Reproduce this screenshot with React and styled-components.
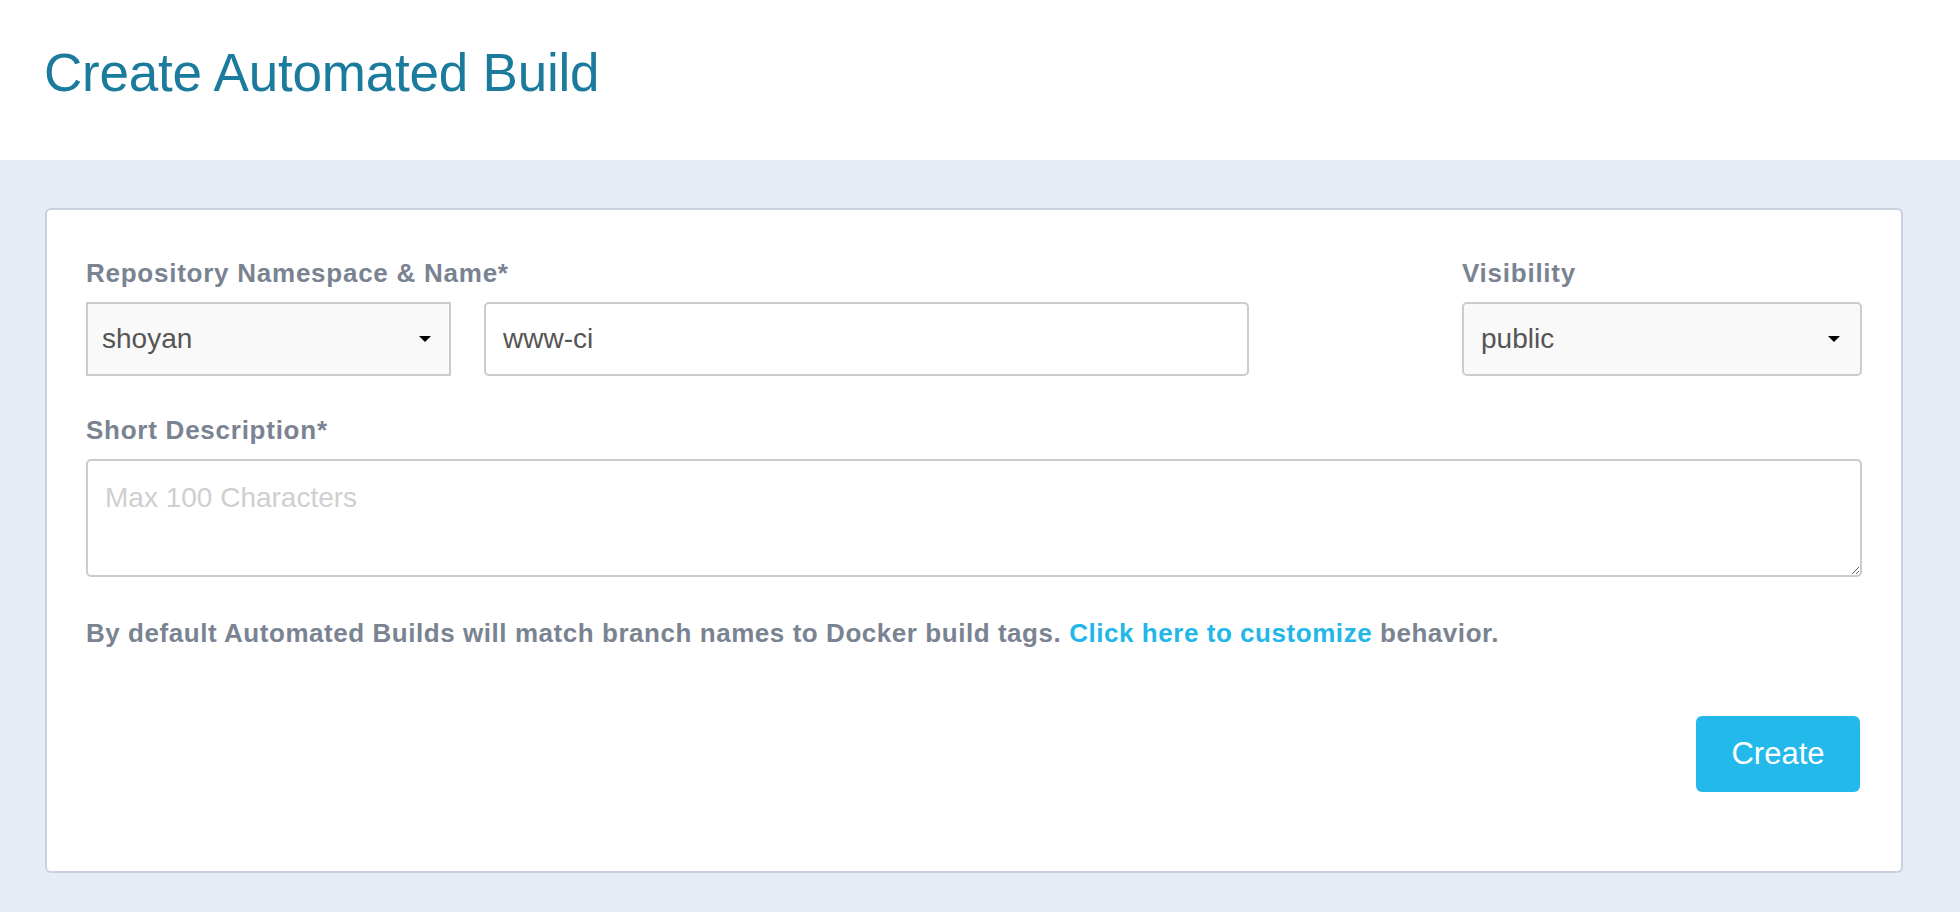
import React from "react";
import styled, { createGlobalStyle } from "styled-components";

const GlobalStyle = createGlobalStyle`
  html, body {
    margin: 0;
    padding: 0;
    background: #e5ecf4;
    font-family: "Liberation Sans", Arial, Helvetica, sans-serif;
  }
  * {
    box-sizing: border-box;
  }
`;

const Header = styled.header`
  height: 160px;
  background: #fff;
  padding: 41px 44px 0;
`;

const Title = styled.h1`
  margin: 0;
  font-size: 53px;
  line-height: 1.2;
  font-weight: 400;
  color: #1b7b9c;
  letter-spacing: -0.2px;
`;

const Main = styled.main`
  padding: 48px 57px 39px 45px;
`;

const Card = styled.section`
  background: #fff;
  border: 2px solid #c8d1dd;
  border-radius: 6px;
  padding: 46px 39px 79px;
`;

const Row = styled.div`
  display: flex;
  justify-content: space-between;
  align-items: flex-start;
`;

const Field = styled.div`
  display: flex;
  flex-direction: column;
  width: ${(p) => p.$width || "auto"};
`;

const Label = styled.label`
  font-size: 26px;
  line-height: 34px;
  font-weight: 700;
  color: #7a8391;
  letter-spacing: 0.75px;
  margin-bottom: ${(p) => p.$gap || 12}px;
`;

const Controls = styled.div`
  display: flex;
  gap: 33px;
`;

const SelectBox = styled.div`
  display: flex;
  align-items: center;
  justify-content: space-between;
  width: ${(p) => p.$width};
  height: 74px;
  padding: 0 ${(p) => p.$caretPad}px 0 ${(p) => p.$pad}px;
  background: #f9f9f9;
  border: 2px solid #cccccc;
  border-radius: ${(p) => (p.$rounded ? "5px" : "0")};
  font-size: 28px;
  color: #555;
`;

const TextInput = styled.input`
  width: ${(p) => p.$width};
  height: 74px;
  padding: 0 17px;
  background: #fff;
  border: 2px solid #cccccc;
  border-radius: 5px;
  font-family: inherit;
  font-size: 28px;
  color: #555;
  outline: none;
`;

const TextArea = styled.textarea`
  display: block;
  width: 100%;
  height: 118px;
  padding: 17px 17px;
  border: 2px solid #cccccc;
  border-radius: 5px;
  font-family: inherit;
  font-size: 28px;
  line-height: 1.4;
  color: #555;
  outline: none;
  resize: vertical;

  &::placeholder {
    color: #cfcfcf;
  }
`;

const Section = styled.div`
  margin-top: ${(p) => p.$top}px;
`;

const Help = styled.p`
  margin: 39px 0 0;
  font-size: 26px;
  line-height: 34px;
  font-weight: 700;
  color: #7a8391;
  letter-spacing: 0.55px;
`;

const Link = styled.a`
  color: #23b7e9;
  text-decoration: none;
`;

const Actions = styled.div`
  display: flex;
  justify-content: flex-end;
  margin-top: 66px;
  padding-right: 2px;
`;

const Button = styled.button`
  width: 164px;
  height: 76px;
  border: none;
  border-radius: 6px;
  background: #23b9eb;
  color: #fff;
  font-family: inherit;
  font-size: 31px;
  cursor: pointer;
`;

const Caret = () => (
  <svg width="12" height="6" viewBox="0 0 12 6">
    <path d="M0 0h12L6 6z" fill="#000" />
  </svg>
);

export default function App() {
  return (
    <>
      <GlobalStyle />
      <Header>
        <Title>Create Automated Build</Title>
      </Header>
      <Main>
        <Card>
          <Row>
            <Field>
              <Label>Repository Namespace &amp; Name*</Label>
              <Controls>
                <SelectBox $width="365px" $pad={14} $caretPad={18}>
                  <span>shoyan</span>
                  <Caret />
                </SelectBox>
                <TextInput $width="765px" defaultValue="www-ci" />
              </Controls>
            </Field>
            <Field $width="400px">
              <Label>Visibility</Label>
              <SelectBox $width="400px" $pad={17} $caretPad={20} $rounded>
                <span>public</span>
                <Caret />
              </SelectBox>
            </Field>
          </Row>
          <Section $top={37}>
            <Label as="div" $gap={12}>Short Description*</Label>
            <TextArea placeholder="Max 100 Characters" />
          </Section>
          <Help>
            By default Automated Builds will match branch names to Docker build
            tags. <Link href="#">Click here to customize</Link> behavior.
          </Help>
          <Actions>
            <Button>Create</Button>
          </Actions>
        </Card>
      </Main>
    </>
  );
}
